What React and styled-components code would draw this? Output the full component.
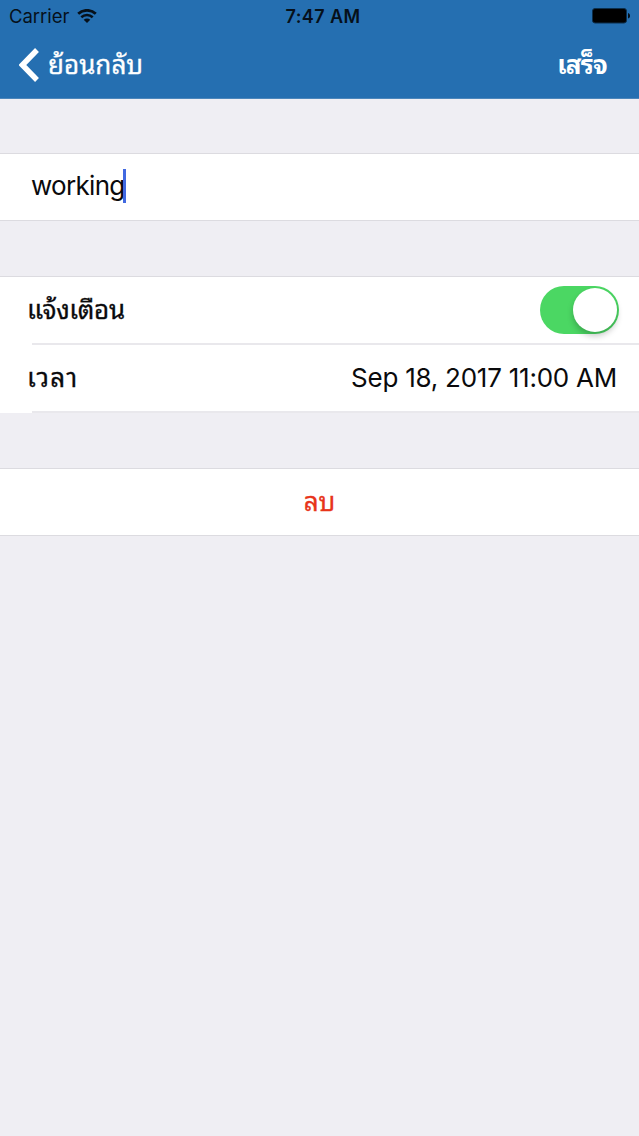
import React from 'react';
import styled, { createGlobalStyle } from 'styled-components';

export default function App() {
  return (
    <Screen>
      <GlobalStyle />
      <Header>
        <StatusBar>
          <Carrier>
            <span>Carrier</span>
            <WifiIcon />
          </Carrier>
          <Clock>7:47 AM</Clock>
          <BatteryIcon />
        </StatusBar>
        <NavBar>
          <BackButton type='button'>
            <BackIcon />
            <ThaiText>ย้อนกลับ</ThaiText>
          </BackButton>
          <DoneButton type='button'>
            <ThaiText $bold $spacing={-0.8}>
              เสร็จ
            </ThaiText>
          </DoneButton>
        </NavBar>
      </Header>

      <Group>
        <InputRow>
          <span>working</span>
          <Caret />
        </InputRow>
      </Group>

      <Group $open>
        <Row>
          <ThaiText $spacing={-0.3}>แจ้งเตือน</ThaiText>
          <Switch role='switch' aria-checked='true'>
            <Knob />
          </Switch>
        </Row>
        <Divider />
        <Row>
          <ThaiText $spacing={1.3}>เวลา</ThaiText>
          <DateText>Sep 18, 2017 11:00 AM</DateText>
        </Row>
        <Divider />
      </Group>

      <Group>
        <DeleteButton type='button'>
          <ThaiText>ลบ</ThaiText>
        </DeleteButton>
      </Group>
    </Screen>
  );
}

function WifiIcon() {
  return (
    <svg width='20' height='14' viewBox='0 0 20 14' fill='none' stroke='#06101a'>
      <path d='M1.2 4.7C6.1 0.2 13.9 0.2 18.8 4.7' strokeWidth='2.8' />
      <path d='M4.3 8.2C7.5 5.3 12.5 5.3 15.7 8.2' strokeWidth='2.5' />
      <path d='M10 14L6.7 10.7C8.6 9 11.4 9 13.3 10.7Z' fill='#06101a' stroke='none' />
    </svg>
  );
}

function BatteryIcon() {
  return (
    <svg width='38' height='16' viewBox='0 0 38 16'>
      <rect x='0.5' y='0.5' width='34' height='14.5' rx='2.5' fill='#000' stroke='#0c2f4c' />
      <path d='M36 5C37.6 5.6 38 6.5 38 7.8S37.6 10 36 10.6Z' fill='#04111c' />
    </svg>
  );
}

function BackIcon() {
  return (
    <svg width='20' height='34' viewBox='0 0 20 34' fill='none'>
      <path d='M18 2L3.4 17L18 32' stroke='#fff' strokeWidth='5.4' />
    </svg>
  );
}

const GlobalStyle = createGlobalStyle`
  * {
    box-sizing: border-box;
  }

  body {
    margin: 0;
    background: #efeff4;
  }

  button {
    padding: 0;
    border: 0;
    background: none;
    color: inherit;
    font: inherit;
  }
`;

const Screen = styled.div`
  min-height: 1136px;
  background: #efeef3;
  color: #0a0a0c;
  font-family: Inter, 'Noto Sans', sans-serif;
  font-size: 26px;
`;

const Header = styled.header`
  height: 99px;
  background: #256fb1;
  border-bottom: 1px solid #4c86bb;
`;

const StatusBar = styled.div`
  display: grid;
  grid-template-columns: 1fr auto 1fr;
  align-items: center;
  height: 32px;
  padding: 0 9px;
  color: #06101a;
  font-size: 18.5px;

  > svg {
    justify-self: end;
  }
`;

const Carrier = styled.div`
  display: flex;
  align-items: center;
  gap: 8px;
  letter-spacing: -0.05px;
`;

const Clock = styled.div`
  margin-left: 7px;
  font-size: 18px;
  font-weight: 600;
  letter-spacing: 0.4px;
`;

const NavBar = styled.nav`
  display: flex;
  align-items: center;
  justify-content: space-between;
  height: 66px;
  padding: 0 32px 0 19px;
  color: #fff;
`;

const BackButton = styled.button`
  display: flex;
  align-items: center;
  gap: 9px;
`;

const DoneButton = styled.button`
  display: flex;
`;

const ThaiText = styled.span`
  margin-bottom: 7px;
  font-family: 'Noto Sans Thai Looped', Loma, Waree, Garuda, Umpush, 'Noto Serif Thai', 'Liberation Serif', serif;
  font-size: 26px;
  font-weight: ${(props) => (props.$bold ? 700 : 400)};
  letter-spacing: ${(props) => props.$spacing || 0}px;
  line-height: 40px;
  white-space: nowrap;
  -webkit-text-stroke: ${(props) => (props.$bold ? 0 : 0.3)}px currentColor;
`;

const Group = styled.section`
  margin-top: ${(props) => (props.$open ? 55 : 54)}px;
  background: #fff;
  border-top: 1px solid #dcdbe0;
  border-bottom: ${(props) => (props.$open ? 0 : 1)}px solid #dcdbe0;

  & + & + & {
    margin-top: 55px;
  }
`;

const InputRow = styled.div`
  display: flex;
  align-items: center;
  height: 66px;
  padding: 0 0 3px 31px;
  letter-spacing: -0.7px;
`;

const Caret = styled.i`
  width: 3px;
  height: 34px;
  margin-left: -2px;
  background: #4169e1;
`;

const Row = styled.div`
  display: flex;
  align-items: center;
  justify-content: space-between;
  height: 66px;
  padding: 0 20px 0 27px;
`;

const Divider = styled.div`
  height: 2px;
  margin-left: 32px;
  background: #e9e8ec;
`;

const Switch = styled.div`
  display: flex;
  justify-content: flex-end;
  width: 79px;
  height: 48px;
  padding: 2px;
  border-radius: 24px;
  background: #4bd763;
`;

const Knob = styled.div`
  width: 44px;
  height: 44px;
  border-radius: 50%;
  background: #fff;
  box-shadow: 0 4px 6px rgba(0, 0, 0, 0.22);
`;

const DateText = styled.span`
  margin: 0 2px 2px 0;
  letter-spacing: -0.24px;
`;

const DeleteButton = styled.button`
  display: flex;
  align-items: center;
  justify-content: center;
  width: 100%;
  height: 66px;
  color: #e8341a;
`;
